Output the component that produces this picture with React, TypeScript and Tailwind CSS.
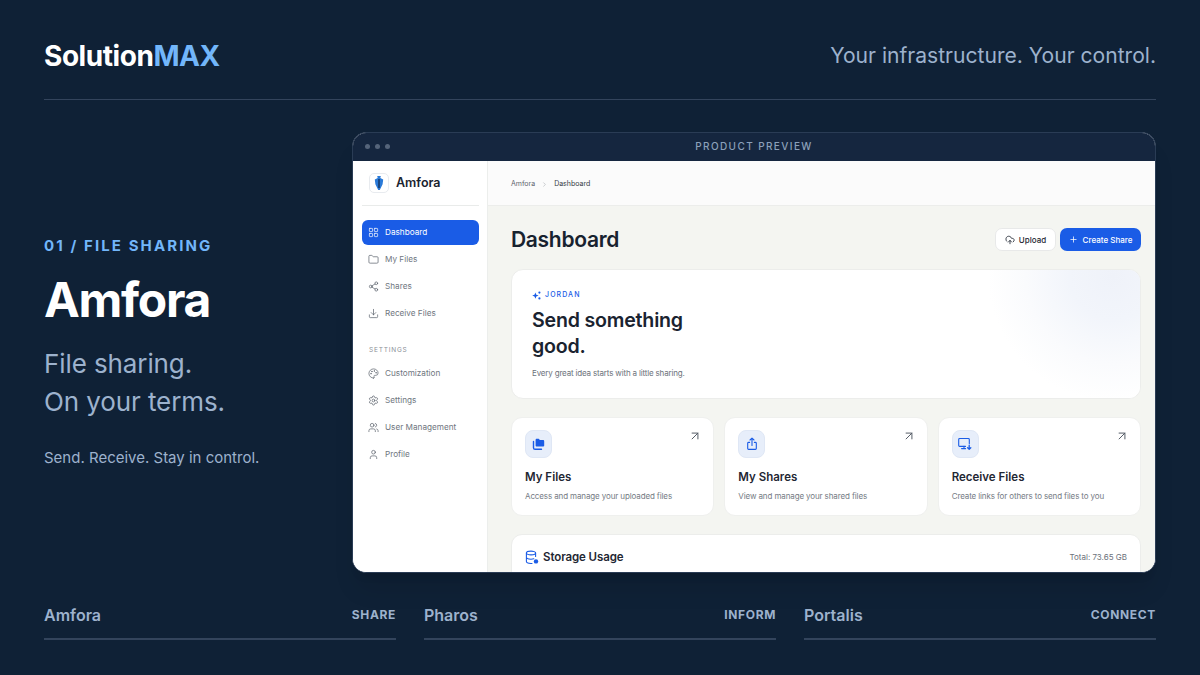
import React from "react";
import {
  LayoutGrid,
  Folder,
  Share2,
  Download,
  Palette,
  Settings,
  Users,
  User,
  ChevronRight,
  CloudUpload,
  Plus,
  ArrowUpRight,
} from "lucide-react";

const mainNav = [
  { label: "Dashboard", icon: LayoutGrid, active: true },
  { label: "My Files", icon: Folder },
  { label: "Shares", icon: Share2 },
  { label: "Receive Files", icon: Download },
];

const settingsNav = [
  { label: "Customization", icon: Palette },
  { label: "Settings", icon: Settings },
  { label: "User Management", icon: Users },
  { label: "Profile", icon: User },
];

const products = [
  { name: "Amfora", tag: "SHARE" },
  { name: "Pharos", tag: "INFORM" },
  { name: "Portalis", tag: "CONNECT" },
];

const FilesIcon = () => (
  <svg width="14" height="14" viewBox="0 0 14 14" fill="none">
    <path d="M1.5 4.5v6.2c0 .9.7 1.6 1.6 1.6h6.4" stroke="#1a5ce6" strokeWidth="1.4" strokeLinecap="round" />
    <path d="M3.6 3c0-.7.5-1.2 1.2-1.2h1.9l1.2 1.2h3c.8 0 1.3.5 1.3 1.2v4.2c0 .7-.5 1.2-1.3 1.2H4.8c-.7 0-1.2-.5-1.2-1.2V3z" fill="#1a5ce6" />
  </svg>
);

const ShareIcon = () => (
  <svg width="14" height="14" viewBox="0 0 14 14" fill="none" stroke="#1a5ce6" strokeWidth="1.1" strokeLinecap="round" strokeLinejoin="round">
    <path d="M4.6 5.4H3.6c-.5 0-.9.4-.9.9v5.2c0 .5.4.9.9.9h6.8c.5 0 .9-.4.9-.9V6.3c0-.5-.4-.9-.9-.9H9.4" />
    <path d="M7 8.4V1.2M5 3l2-1.9L9 3" />
  </svg>
);

const ReceiveIcon = () => (
  <svg width="16" height="14" viewBox="0 0 16 14" fill="none" stroke="#1a5ce6" strokeWidth="1.1" strokeLinecap="round" strokeLinejoin="round">
    <path d="M8.5 9.4H2.6c-.5 0-.9-.4-.9-.9V2.4c0-.5.4-.9.9-.9h8.8c.5 0 .9.4.9.9v4.2" />
    <path d="M7 9.4v2M4.6 11.6h4" />
    <path d="M12.2 8.2v4M10.6 10.8l1.6 1.5 1.6-1.5" strokeWidth="1.3" />
  </svg>
);

const StorageIcon = () => (
  <svg width="14" height="15" viewBox="0 0 14 15" fill="none" stroke="#1a5ce6" strokeWidth="1.1" strokeLinecap="round">
    <ellipse cx="6" cy="3" rx="4.6" ry="1.9" />
    <path d="M1.4 3v8.6c0 1 2 1.9 4.6 1.9h1M1.4 7.3c0 1 2 1.9 4.6 1.9 1 0 2-.1 2.8-.4M10.6 3v3.4" />
    <circle cx="11" cy="11.4" r="2.2" fill="#1a5ce6" stroke="none" />
  </svg>
);

const SparkIcon = () => (
  <svg width="9" height="9" viewBox="0 0 9 9" fill="#1a5ce6">
    <path d="M3.4 1.4l.9 2.3 2.3.9-2.3.9-.9 2.3-.9-2.3L.2 4.6l2.3-.9z" />
    <circle cx="7.4" cy="1.6" r="1.1" />
    <circle cx="7.4" cy="7.4" r="1.1" />
  </svg>
);

const cards = [
  { title: "My Files", text: "Access and manage your uploaded files", icon: FilesIcon },
  { title: "My Shares", text: "View and manage your shared files", icon: ShareIcon },
  { title: "Receive Files", text: "Create links for others to send files to you", icon: ReceiveIcon },
];

const AmforaLogo = () => (
  <svg width="10" height="16" viewBox="0 0 10 16">
    <path d="M3.2 1h3.6l-.5 2 2.9 1.6-.6 4.6L5.8 15H4.2L1.4 9.2.8 4.6 3.7 3z" fill="#2a7ad8" />
    <path d="M4.3 4h1.4v9H4.3z" fill="#14335e" />
  </svg>
);

function NavItem({ label, icon: Icon, active }: { label: string; icon: React.ElementType; active?: boolean }) {
  return (
    <div
      className={
        active
          ? "flex h-[25px] items-center gap-[6px] rounded-[6px] bg-[#1a5ce6] pl-[6px] text-white"
          : "flex h-[25px] items-center gap-[6px] pl-[6px] text-[#6f7680]"
      }
    >
      <Icon size={11} strokeWidth={1.5} className={active ? "text-white" : "text-[#555c66]"} />
      <span className="text-[8.2px]">{label}</span>
    </div>
  );
}

export default function App() {
  return (
    <div className="flex h-[675px] w-[1200px] flex-col overflow-hidden bg-[#0f2136] px-[44px] font-['Inter',sans-serif]">
      <header className="flex h-[100px] shrink-0 items-center justify-between border-b border-[#33445c] pt-[13px]">
        <div className="text-[28px] font-bold tracking-[-0.45px] text-white">
          Solution<span className="text-[#72b6fa]">MAX</span>
        </div>
        <div className="text-[21.1px] text-[#9db2cd]">Your infrastructure. Your control.</div>
      </header>

      <main className="flex h-[472px] shrink-0 items-start pt-[32px]">
        <section className="w-[308px] shrink-0 pt-[105px]">
          <div className="text-[15px] font-bold leading-[18px] tracking-[2.1px] text-[#72b6fa]">01 / FILE SHARING</div>
          <h1 className="mt-[15px] text-[48px] font-bold leading-[60px] tracking-[-1.3px] text-white">Amfora</h1>
          <p className="mt-[15px] text-[26px] leading-[38px] tracking-[-0.1px] text-[#9db2cd]">
            File sharing.
            <br />
            On your terms.
          </p>
          <p className="mt-[26px] text-[15px] leading-[22px] text-[#9db2cd]">Send. Receive. Stay in control.</p>
        </section>

        <section className="flex h-[441px] w-[804px] shrink-0 flex-col overflow-hidden rounded-[14px] border border-[#2a3c55] bg-white shadow-xl">
          <div className="relative flex h-[28px] shrink-0 items-center justify-center bg-[#15263f] pb-[1px]">
            <div className="absolute left-[12px] flex gap-[5px]">
              <span className="h-[5px] w-[5px] rounded-full bg-[#55647a]" />
              <span className="h-[5px] w-[5px] rounded-full bg-[#55647a]" />
              <span className="h-[5px] w-[5px] rounded-full bg-[#55647a]" />
            </div>
            <span className="text-[10px] font-medium tracking-[1.4px] text-[#8ba0ba]">PRODUCT PREVIEW</span>
          </div>

          <div className="flex min-h-0 flex-1">
            <aside className="w-[135px] shrink-0 border-r border-[#eceeec] bg-white pl-[9px] pr-[8px]">
              <div className="flex h-[45px] items-center gap-[7px] border-b border-[#e9ebea] pl-[7px]">
                <div className="flex h-[20px] w-[20px] items-center justify-center rounded-[5px] border border-[#e8ebef] bg-white">
                  <AmforaLogo />
                </div>
                <span className="text-[12.5px] font-semibold text-[#1a2330]">Amfora</span>
              </div>
              <nav className="mt-[14px] flex flex-col gap-[2px]">
                {mainNav.map((item) => (
                  <NavItem key={item.label} {...item} />
                ))}
              </nav>
              <div className="mt-[20px] pl-[7px] text-[6.5px] leading-[8px] tracking-[0.8px] text-[#8b9098]">SETTINGS</div>
              <nav className="mt-[7px] flex flex-col gap-[2px]">
                {settingsNav.map((item) => (
                  <NavItem key={item.label} {...item} />
                ))}
              </nav>
            </aside>

            <div className="min-w-0 flex-1 bg-[#f4f5f1]">
              <div className="flex h-[45px] items-center gap-[6px] border-b border-[#ecedeb] bg-[#fbfbfb] pl-[23px] pt-[2px] text-[7px]">
                <span className="text-[#5d646e]">Amfora</span>
                <ChevronRight size={7} className="text-[#a9aeb4]" />
                <span className="text-[#333a44]">Dashboard</span>
              </div>

              <div className="pl-[23px] pr-[14px]">
                <div className="flex h-[63px] items-center justify-between pt-[4px]">
                  <h2 className="text-[21px] font-semibold tracking-[-0.3px] text-[#17222f]">Dashboard</h2>
                  <div className="flex items-center gap-[4px]">
                    <button className="flex h-[23px] w-[61px] items-center justify-center gap-[4px] rounded-[7px] border border-[#e8e9e9] bg-white text-[8px] font-medium text-[#1f2733]">
                      <CloudUpload size={10} /> Upload
                    </button>
                    <button className="flex h-[23px] w-[81px] items-center justify-center gap-[5px] rounded-[7px] bg-[#1a5ce6] text-[8px] font-medium text-white">
                      <Plus size={9} /> Create Share
                    </button>
                  </div>
                </div>

                <div className="relative h-[130px] overflow-hidden rounded-[12px] border border-[#ecedeb] bg-white pl-[20px] pt-[20px]">
                  <div className="absolute right-[-98px] top-[-119px] h-[250px] w-[250px] bg-[radial-gradient(circle_closest-side,#eff2f9_0%,#f2f5fb_35%,#fafbfd_70%,#ffffff_100%)]" />
                  <div className="relative flex items-center gap-[4px] text-[7px] font-medium leading-[10px] tracking-[1.1px] text-[#1a5ce6]">
                    <SparkIcon /> JORDAN
                  </div>
                  <h3 className="relative mt-[7px] w-[180px] text-[19.6px] font-semibold leading-[26px] tracking-[-0.2px] text-[#1a2330]">
                    Send something good.
                  </h3>
                  <p className="relative mt-[8px] text-[8px] leading-[12px] tracking-[-0.17px] text-[#6c727b]">Every great idea starts with a little sharing.</p>
                </div>

                <div className="mt-[18px] grid grid-cols-3 gap-[10px]">
                  {cards.map((c) => (
                    <div key={c.title} className="relative h-[99px] rounded-[11px] border border-[#eff0ee] bg-white pl-[13px] pt-[12px]">
                      <div className="flex h-[28px] w-[27px] items-center justify-center rounded-[8px] border border-[#dfe7f5] bg-[#e7eefa]">
                        <c.icon />
                      </div>
                      <ArrowUpRight size={14} strokeWidth={1.7} className="absolute right-[11px] top-[11px] text-[#555c66]" />
                      <div className="mt-[11px] text-[11.5px] font-semibold leading-[16px] text-[#1f2733]">{c.title}</div>
                      <div className="mt-[5px] text-[8px] leading-[12px] tracking-[-0.12px] text-[#757b84]">{c.text}</div>
                    </div>
                  ))}
                </div>

                <div className="mt-[18px] flex h-[60px] items-start justify-between rounded-[11px] border border-[#ecedeb] bg-white px-[13px] pt-[14px]">
                  <div className="flex items-center gap-[4px]">
                    <StorageIcon />
                    <span className="text-[11.5px] font-semibold leading-[16px] tracking-[-0.1px] text-[#1f2733]">Storage Usage</span>
                  </div>
                  <span className="text-[8px] leading-[16px] text-[#6c727b]">Total: 73.65 GB</span>
                </div>
              </div>
            </div>
          </div>
        </section>
      </main>

      <footer className="grid grid-cols-3 gap-[28px] pt-[20px]">
        {products.map((p) => (
          <div key={p.name} className="flex h-[48px] items-start justify-between border-b-2 border-[#33445c] pt-[11px]">
            <span className="text-[16px] font-semibold leading-[24px] text-[#9db2cd]">{p.name}</span>
            <span className="text-[12px] font-bold leading-[24px] tracking-[0.65px] text-[#9db2cd]">{p.tag}</span>
          </div>
        ))}
      </footer>
    </div>
  );
}
